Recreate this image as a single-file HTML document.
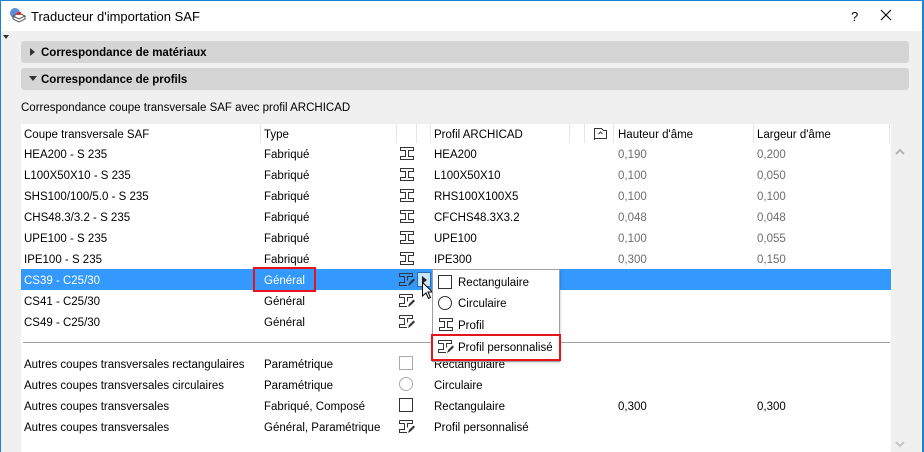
<!DOCTYPE html>
<html><head><meta charset="utf-8"><style>
*{margin:0;padding:0;box-sizing:border-box}
body{width:924px;height:452px;overflow:hidden;background:#f0f0f0;font-family:"Liberation Sans",sans-serif;font-size:11.5px;color:#000;position:relative}
.a{position:absolute;white-space:nowrap}
.t{position:absolute;white-space:nowrap;line-height:14px;margin-top:1px}
svg{position:absolute}
.g{color:#6d6d6d}
.w{color:#fff}
</style></head><body>
<div class="a" style="left:0;top:0;width:924px;height:31px;background:#fff"></div>
<div class="a" style="left:0;top:0;width:924px;height:1px;background:#1883d7"></div>
<div class="a" style="left:0;top:0;width:1px;height:452px;background:#1883d7"></div>
<div class="a" style="left:922px;top:0;width:2px;height:452px;background:#1883d7"></div>
<svg style="left:9px;top:7px" width="18" height="18" viewBox="0 0 18 18"><circle cx="6" cy="6" r="5" fill="#5b8fd6"/><path d="M4 9l6-3 6 3-6 3z" fill="#fff" stroke="#555"/><path d="M4 9v3l6 3 6-3V9" fill="none" stroke="#555"/><rect x="8" y="5" width="4" height="3" fill="#d33"/></svg>
<div class="t" style="left:31px;top:9px;font-size:13px;color:#000">Traducteur d'importation SAF</div>
<div class="t" style="left:851px;top:9px;font-size:13px">?</div>
<svg style="left:880px;top:9px" width="12" height="12"><path d="M1 1L11 11M11 1L1 11" stroke="#000" stroke-width="1.1"/></svg>
<svg style="left:3px;top:35px" width="6" height="4"><path d="M0 0H6L3 4z" fill="#333"/></svg>

<div class="a" style="left:21px;top:41px;width:888px;height:22px;background:#d5d5d5;border-radius:3px"></div>
<svg style="left:30px;top:48px" width="5" height="8"><path d="M0 0L5 4L0 8z" fill="#333"/></svg>
<div class="t" style="left:41px;top:45px;font-weight:bold">Correspondance de matériaux</div>
<div class="a" style="left:21px;top:68px;width:888px;height:22px;background:#d5d5d5;border-radius:3px"></div>
<svg style="left:29px;top:76px" width="8" height="5"><path d="M0 0H8L4 5z" fill="#333"/></svg>
<div class="t" style="left:41px;top:72px;font-weight:bold">Correspondance de profils</div>
<div class="t" style="left:21px;top:100px">Correspondance coupe transversale SAF avec profil ARCHICAD</div>

<div class="a" style="left:21px;top:124px;width:870px;height:328px;background:#fff"></div>
<div class="a" style="left:891px;top:124px;width:18px;height:328px;background:#f0f0f0"></div>
<svg style="left:895px;top:148px" width="10" height="7"><path d="M1 6L5 2L9 6" stroke="#b5b5b5" stroke-width="2" fill="none"/></svg>
<svg style="left:895px;top:441px" width="10" height="7"><path d="M1 1L5 5L9 1" stroke="#c5c5c5" stroke-width="2" fill="none"/></svg>
<div class="a" style="left:260px;top:124px;width:1px;height:19px;background:#e5e5e5"></div>
<div class="a" style="left:396px;top:124px;width:1px;height:19px;background:#e5e5e5"></div>
<div class="a" style="left:416px;top:124px;width:1px;height:19px;background:#e5e5e5"></div>
<div class="a" style="left:430px;top:124px;width:1px;height:19px;background:#e5e5e5"></div>
<div class="a" style="left:569px;top:124px;width:1px;height:19px;background:#e5e5e5"></div>
<div class="a" style="left:584px;top:124px;width:1px;height:19px;background:#e5e5e5"></div>
<div class="a" style="left:613px;top:124px;width:1px;height:19px;background:#e5e5e5"></div>
<div class="a" style="left:753px;top:124px;width:1px;height:19px;background:#e5e5e5"></div>
<div class="a" style="left:889px;top:124px;width:1px;height:19px;background:#e5e5e5"></div>
<div class="t" style="left:24px;top:127px">Coupe transversale SAF</div>
<div class="t" style="left:264px;top:127px">Type</div>
<div class="t" style="left:434px;top:127px">Profil ARCHICAD</div>
<svg style="left:593px;top:127px" width="15" height="14"><path d="M1.5 13V1.5H8.5L10.5 3.5H13.5V11.5H1.5" fill="none" stroke="#333"/><path d="M5.5 7L7.5 5L9.5 7" fill="none" stroke="#333"/></svg>
<div class="t" style="left:618px;top:127px">Hauteur d'âme</div>
<div class="t" style="left:757px;top:127px">Largeur d'âme</div>

<div class="a" style="left:21px;top:269px;width:870px;height:21px;background:#3399ff"></div>
<div class="a" style="left:253px;top:267px;width:63px;height:25px;border:2px solid #e8141b"></div>

<svg width="0" height="0"><defs>
<path id="ib" d="M0.5 0.5H13.5V3.5H8.5V9.5H13.5V12.5H0.5V9.5H5.5V3.5H0.5Z" fill="none" stroke="#333"/>
</defs></svg>

<div class="t" style="left:24px;top:147px">HEA200 - S 235</div><div class="t" style="left:264px;top:147px">Fabriqué</div><div class="t" style="left:434px;top:147px">HEA200</div><div class="t g" style="left:618px;top:147px">0,190</div><div class="t g" style="left:757px;top:147px">0,200</div>
<div class="t" style="left:24px;top:168px">L100X50X10 - S 235</div><div class="t" style="left:264px;top:168px">Fabriqué</div><div class="t" style="left:434px;top:168px">L100X50X10</div><div class="t g" style="left:618px;top:168px">0,100</div><div class="t g" style="left:757px;top:168px">0,050</div>
<div class="t" style="left:24px;top:189px">SHS100/100/5.0 - S 235</div><div class="t" style="left:264px;top:189px">Fabriqué</div><div class="t" style="left:434px;top:189px">RHS100X100X5</div><div class="t g" style="left:618px;top:189px">0,100</div><div class="t g" style="left:757px;top:189px">0,100</div>
<div class="t" style="left:24px;top:210px">CHS48.3/3.2 - S 235</div><div class="t" style="left:264px;top:210px">Fabriqué</div><div class="t" style="left:434px;top:210px">CFCHS48.3X3.2</div><div class="t g" style="left:618px;top:210px">0,048</div><div class="t g" style="left:757px;top:210px">0,048</div>
<div class="t" style="left:24px;top:231px">UPE100 - S 235</div><div class="t" style="left:264px;top:231px">Fabriqué</div><div class="t" style="left:434px;top:231px">UPE100</div><div class="t g" style="left:618px;top:231px">0,100</div><div class="t g" style="left:757px;top:231px">0,055</div>
<div class="t" style="left:24px;top:252px">IPE100 - S 235</div><div class="t" style="left:264px;top:252px">Fabriqué</div><div class="t" style="left:434px;top:252px">IPE300</div><div class="t g" style="left:618px;top:252px">0,300</div><div class="t g" style="left:757px;top:252px">0,150</div>
<div class="t w" style="left:24px;top:273px">CS39 - C25/30</div><div class="t w" style="left:264px;top:273px">Général</div>
<div class="t" style="left:24px;top:294px">CS41 - C25/30</div><div class="t" style="left:264px;top:294px">Général</div>
<div class="t" style="left:24px;top:315px">CS49 - C25/30</div><div class="t" style="left:264px;top:315px">Général</div>

<svg style="left:400px;top:147px" width="15" height="14"><use href="#ib"/></svg>
<svg style="left:400px;top:168px" width="15" height="14"><use href="#ib"/></svg>
<svg style="left:400px;top:189px" width="15" height="14"><use href="#ib"/></svg>
<svg style="left:400px;top:210px" width="15" height="14"><use href="#ib"/></svg>
<svg style="left:400px;top:231px" width="15" height="14"><use href="#ib"/></svg>
<svg style="left:400px;top:252px" width="15" height="14"><use href="#ib"/></svg>

<svg width="0" height="0"><defs>
<g id="cp"><path d="M0.5 0.5H13.5V3.5H8.5V7.5M5.5 3.5H0.5V0.5M5.5 3.5V9.5H0.5V12.5H8" fill="none" stroke="#333"/><path d="M9 13L10 10L14.5 5.5L16 7L11.5 11.5Z" fill="#333"/></g>
</defs></svg>
<svg style="left:399px;top:273px" width="17" height="14"><use href="#cp"/></svg>
<svg style="left:399px;top:294px" width="17" height="14"><use href="#cp"/></svg>
<svg style="left:399px;top:315px" width="17" height="14"><use href="#cp"/></svg>
<svg style="left:399px;top:420px" width="17" height="14"><use href="#cp"/></svg>

<div class="a" style="left:417px;top:272px;width:14px;height:15px;background:#cce4f7;border:1px solid #2a6fb5"></div>
<svg style="left:422px;top:276px" width="5" height="8"><path d="M0 0L5 4L0 8z" fill="#222"/></svg>
<svg style="left:422px;top:282px" width="12" height="18"><path d="M0.5 0.5V14L4 11L6.5 16.5L8.5 15.5L6 10H10.5Z" fill="#fff" stroke="#000"/></svg>

<div class="a" style="left:23px;top:342px;width:867px;height:1px;background:#a0a0a0"></div>

<div class="t" style="left:24px;top:357px">Autres coupes transversales rectangulaires</div><div class="t" style="left:264px;top:357px">Paramétrique</div><div class="t" style="left:434px;top:357px">Rectangulaire</div>
<div class="t" style="left:24px;top:378px">Autres coupes transversales circulaires</div><div class="t" style="left:264px;top:378px">Paramétrique</div><div class="t" style="left:434px;top:378px">Circulaire</div>
<div class="t" style="left:24px;top:399px">Autres coupes transversales</div><div class="t" style="left:264px;top:399px">Fabriqué, Composé</div><div class="t" style="left:434px;top:399px">Rectangulaire</div><div class="t" style="left:618px;top:399px">0,300</div><div class="t" style="left:757px;top:399px">0,300</div>
<div class="t" style="left:24px;top:420px">Autres coupes transversales</div><div class="t" style="left:264px;top:420px">Général, Paramétrique</div><div class="t" style="left:434px;top:420px">Profil personnalisé</div>
<svg style="left:399px;top:356px" width="15" height="15"><rect x="0.5" y="0.5" width="13" height="13" fill="none" stroke="#aaa"/></svg>
<svg style="left:399px;top:377px" width="15" height="15"><circle cx="7" cy="7" r="6.5" fill="none" stroke="#aaa"/></svg>
<svg style="left:399px;top:398px" width="15" height="15"><rect x="0.5" y="0.5" width="13" height="13" fill="none" stroke="#333"/></svg>

<div class="a" style="left:432px;top:269px;width:128px;height:93px;background:#fff;border:1px solid #a0a0a0;box-shadow:1px 1px 2px rgba(0,0,0,.15)"></div>
<svg style="left:438px;top:275px" width="15" height="15"><rect x="0.5" y="0.5" width="13" height="13" fill="none" stroke="#333"/></svg>
<div class="t" style="left:458px;top:275px">Rectangulaire</div>
<svg style="left:438px;top:296px" width="15" height="15"><circle cx="7" cy="7" r="6.5" fill="none" stroke="#333"/></svg>
<div class="t" style="left:458px;top:296px">Circulaire</div>
<svg style="left:439px;top:318px" width="15" height="14"><use href="#ib"/></svg>
<div class="t" style="left:458px;top:318px">Profil</div>
<svg style="left:438px;top:340px" width="17" height="14"><use href="#cp"/></svg>
<div class="t" style="left:458px;top:340px">Profil personnalisé</div>
<div class="a" style="left:431px;top:334px;width:130px;height:27px;border:2px solid #e8141b"></div>
</body></html>
